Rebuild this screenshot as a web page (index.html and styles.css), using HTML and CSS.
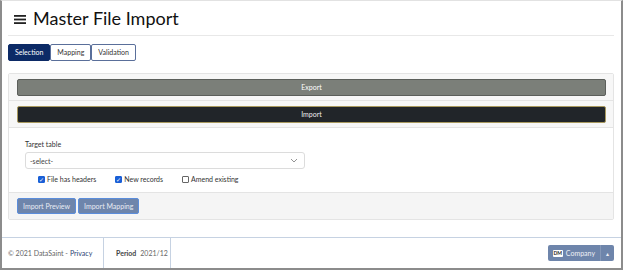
FILE: index.html
```html
<!DOCTYPE html>
<html lang="en">
<head>
    <meta charset="UTF-8">
    <title>Master File Import</title>
    <link rel="stylesheet" href="styles.css">
</head>
<body>
<div class="frame">
    <div class="main">
        <div class="page-head">
            <svg class="burger" width="12" height="9" viewBox="0 0 12 9">
                <rect x="0" y="0" width="12" height="1.8" fill="#222"/>
                <rect x="0" y="3.6" width="12" height="1.8" fill="#222"/>
                <rect x="0" y="7.2" width="12" height="1.8" fill="#222"/>
            </svg>
            <h1>Master File Import</h1>
        </div>

        <div class="tabs">
            <span class="tab active">Selection</span>
            <span class="tab">Mapping</span>
            <span class="tab">Validation</span>
        </div>

        <div class="card">
            <div class="card-row">
                <div class="btn-wide export">Export</div>
            </div>
            <div class="card-row">
                <div class="btn-wide import">Import</div>
            </div>
            <div class="card-body">
                <label class="field-label">Target table</label>
                <div class="select">
                    <span>-select-</span>
                    <svg width="8" height="5" viewBox="0 0 8 5"><path d="M1 1l3 3 3-3" fill="none" stroke="#888" stroke-width="0.9"/></svg>
                </div>
                <div class="checks">
                    <span class="check"><span class="box on">&#10003;</span>File has headers</span>
                    <span class="check"><span class="box on">&#10003;</span>New records</span>
                    <span class="check"><span class="box"></span>Amend existing</span>
                </div>
            </div>
            <div class="card-foot">
                <span class="btn-sm">Import Preview</span>
                <span class="btn-sm">Import Mapping</span>
            </div>
        </div>
    </div>

    <div class="footer">
        <div class="foot-cell copy">&copy; 2021 DataSaint - <a href="#">Privacy</a></div>
        <div class="foot-cell period"><b>Period</b> 2021/12</div>
        <div class="foot-fill"></div>
        <div class="company">
            <span class="company-main"><span class="dm">DM</span>Company</span>
            <span class="company-caret">&#9652;</span>
        </div>
    </div>
</div>
</body>
</html>
```

FILE: styles.css
```css
* {
    box-sizing: border-box;
}
body {
    margin: 0;
    font-family: Lato, "Open Sans", sans-serif;
    color: #333;
    background: #fff;
}
.frame {
    height: 270px;
    width: 623px;
    border-top: 1px solid #e2e2e2;
    border-left: 2px solid #8c8c8c;
    border-right: 2px solid #8c8c8c;
    border-bottom: 2px solid #8c8c8c;
    display: flex;
    flex-direction: column;
}
.main {
    padding: 0 7px 0 6px;
    flex: 1;
}
.page-head {
    display: flex;
    align-items: center;
    height: 35px;
    border-bottom: 1px solid #e8e8e8;
    padding-left: 6px;
}
.burger {
    margin-right: 7px;
    margin-top: 2px;
}
h1 {
    margin: 0;
    font-size: 18px;
    font-weight: 400;
    color: #111;
}
.tabs {
    display: flex;
    margin-top: 8px;
}
.tab {
    font-size: 7px;
    color: #333;
    height: 17px;
    line-height: 15px;
    padding: 0 6px;
    border: 1px solid #5a6f9a;
    border-radius: 2px;
    background: #fff;
}
.tab.active {
    background: #0c2a66;
    border-color: #0c2a66;
    color: #fff;
}
.card {
    margin-top: 12px;
    border: 1px solid #e4e4e4;
    border-radius: 2px;
    width: 606px;
}
.card-row {
    background: #f7f7f7;
    border-bottom: 1px solid #e4e4e4;
    padding: 5px 7px 4px 8px;
}
.card-row + .card-row {
    padding-top: 5px;
    padding-bottom: 4px;
}
.btn-wide {
    height: 17px;
    line-height: 15px;
    text-align: center;
    font-size: 7px;
    color: #fff;
    border-radius: 2px;
}
.export {
    background: #7b7f79;
    border: 1px solid #5c5f5b;
}
.import {
    background: #212529;
    border: 1px solid #a8995e;
    color: #eee;
}
.card-body {
    padding: 12px 16px 9px;
    background: #fff;
    border-bottom: 1px solid #e4e4e4;
}
.field-label {
    display: block;
    font-size: 7px;
    color: #333;
    margin-bottom: 4px;
}
.select {
    width: 280px;
    height: 17px;
    border: 1px solid #dcdcdc;
    border-radius: 3px;
    display: flex;
    align-items: center;
    justify-content: space-between;
    padding: 0 6px 0 4px;
    font-size: 7px;
    color: #444;
}
.checks {
    display: flex;
    margin-top: 6px;
    padding-left: 13px;
    font-size: 7px;
    color: #333;
}
.check {
    display: flex;
    align-items: center;
    margin-right: 19px;
}
.box {
    width: 7px;
    height: 7px;
    border: 1px solid #666;
    border-radius: 1px;
    margin-right: 2px;
    font-size: 6px;
    line-height: 5px;
    text-align: center;
    color: #fff;
}
.box.on {
    background: #1a5fd6;
    border-color: #1a5fd6;
}
.card-foot {
    background: #f5f5f5;
    padding: 5px 8px 5px;
    display: flex;
    gap: 2px;
}
.btn-sm {
    height: 16px;
    line-height: 14px;
    font-size: 7px;
    color: #e8ecf3;
    background: #6e85ab;
    border: 1px solid #5b8ddb;
    border-radius: 2px;
    padding: 0 5px;
}
.footer {
    height: 31px;
    border-top: 1px solid #c6d2e2;
    display: flex;
    align-items: stretch;
    font-size: 7px;
    color: #666;
}
.foot-cell {
    display: flex;
    align-items: center;
    border-right: 1px solid #c6d2e2;
}
.copy {
    padding-left: 6px;
    width: 102px;
}
.copy a {
    color: #2b3f74;
    text-decoration: none;
    margin-left: 2px;
}
.period {
    padding-left: 12px;
    width: 67px;
}
.period b {
    color: #444;
    margin-right: 4px;
}
.foot-fill {
    flex: 1;
}
.company {
    display: flex;
    align-self: center;
    margin-right: 7px;
    height: 16px;
    background: #6e85ab;
    border-radius: 2px;
    color: #eef1f6;
}
.company-main {
    display: flex;
    align-items: center;
    padding: 0 5px 0 5px;
    border-right: 1px solid #8598b8;
}
.dm {
    background: #fff;
    color: #222;
    font-size: 5px;
    font-weight: 700;
    width: 10px;
    text-align: center;
    height: 7px;
    line-height: 7px;
    border-radius: 1px;
    margin-right: 3px;
}
.company-caret {
    display: flex;
    align-items: center;
    padding: 0 5px;
    font-size: 6px;
}
```
